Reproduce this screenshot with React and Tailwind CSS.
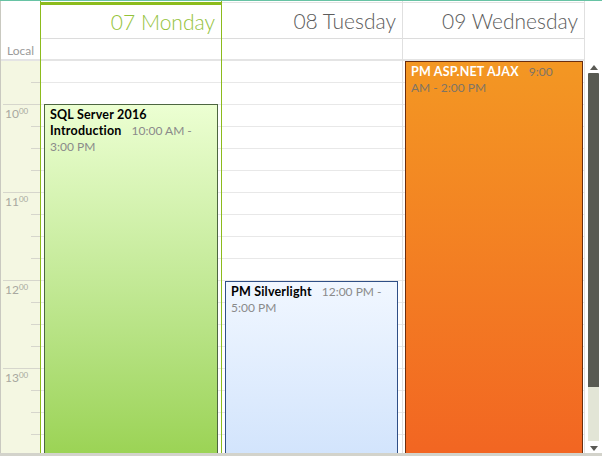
import React from 'react';

const ROWS = 18;

const days = [
  { key: 'mon', label: '07 Monday', width: 'w-[182px]', today: true },
  { key: 'tue', label: '08 Tuesday', width: 'w-[181px]' },
  { key: 'wed', label: '09 Wednesday', width: 'w-[182px]' },
];

const events = {
  mon: {
    title: 'SQL Server 2016 Introduction',
    time: '10:00 AM - 3:00 PM',
    box: 'top-[43px] left-[3px] right-[3px] h-[352px] border-[#4d6640] bg-gradient-to-b from-[#ecffd2] to-[#9bd354] pr-[9px]',
    titleColor: 'text-black',
    timeColor: 'text-[#8a8a8a]',
  },
  tue: {
    title: 'PM Silverlight',
    time: '12:00 PM - 5:00 PM',
    box: 'top-[220px] left-[3px] right-[4px] h-[176px] border-[#2f4f86] bg-gradient-to-b from-[#f1f7ff] to-[#d2e4fc] pr-[9px]',
    titleColor: 'text-black',
    timeColor: 'text-[#8a8a8a]',
  },
  wed: {
    title: 'PM ASP.NET AJAX',
    time: '9:00 AM - 2:00 PM',
    box: 'top-0 left-[2px] right-px h-[396px] border-[#6a2d0e] bg-gradient-to-b from-[#f39723] to-[#f26522] pr-[24px]',
    titleColor: 'text-white',
    timeColor: 'text-[#7e7466]',
  },
};

const Event = ({ ev }) => (
  <div className={`absolute border ${ev.box} pl-[5px] pt-[2px]`}>
    <p className="text-[12px] leading-[16px]">
      <span className={`font-bold text-[12.5px] tracking-[0.2px] ${ev.titleColor}`}>{ev.title}</span>
      <span className={`ml-[10px] ${ev.timeColor}`}>{ev.time}</span>
    </p>
  </div>
);

const TimeColumn = () => (
  <div className="w-[40px] flex-shrink-0 flex flex-col border-l border-[#c9c9c0]">
    <div className="h-px bg-white" />
    <div className="h-[57px] bg-white flex items-end pl-[6px] pb-[2px]">
      <span className="text-[12px] leading-none text-[#9a9a9a]">Local</span>
    </div>
    <div className="h-[2px] bg-[#e4e4e4]" />
    <div className="h-[392px] overflow-hidden bg-[#f4f7e2]">
      {Array.from({ length: ROWS }).map((_, i) => {
        const hour = i % 4 === 1;
        const labelHour = i % 4 === 2 ? 10 + Math.floor((i - 2) / 4) : null;
        return (
          <div key={i} className="h-[22px] flex flex-col">
            <div className="flex-1 pl-[4px] pt-[3px] text-[12px] leading-none text-[#a8a8a0]">
              {labelHour && (
                <span>
                  {labelHour}
                  <sup className="text-[8px] top-[-0.45em]">00</sup>
                </span>
              )}
            </div>
            <div className={`h-px bg-[#d6d6cc] ${hour ? 'w-full ml-[2px]' : 'w-[9px] self-end'}`} />
          </div>
        );
      })}
    </div>
  </div>
);

const DayColumn = ({ day }) => {
  const ev = events[day.key];
  return (
    <div
      className={`${day.width} flex-shrink-0 flex flex-col ${
        day.today ? 'border-x border-[#8cbb1c]' : 'border-r border-[#e0e0e0]'
      }`}
    >
      <div className="h-px bg-white" />
      <div
        className={`h-[37px] flex items-center justify-end pr-[6px] border-b border-[#dcdcdc] ${
          day.today ? 'border-t-[3px] border-t-[#8cbb1c]' : 'border-t border-t-[#e2e2e2]'
        }`}
      >
        <span
          className={`text-[21px] font-light leading-none ${
            day.today ? 'text-[#94c23a]' : 'text-[#5c5c5c]'
          }`}
        >
          {day.label}
        </span>
      </div>
      <div className="h-[22px] border-b-2 border-[#e4e4e4]" />
      <div className="relative h-[392px] overflow-hidden">
        {Array.from({ length: ROWS }).map((_, i) => (
          <div key={i} className="h-[22px] border-b border-[#e8e8e8]" />
        ))}
        <Event ev={ev} />
      </div>
    </div>
  );
};

const ScrollColumn = () => (
  <div className="w-[17px] flex-shrink-0 flex flex-col bg-white">
    <div className="h-[61px]" />
    <div className="h-[392px] flex flex-col items-center pt-[3px]">
      <svg className="block flex-shrink-0" width="8" height="5" viewBox="0 0 8 5">
        <path d="M0 5 L4 0 L8 5 Z" fill="#5a5a55" />
      </svg>
      <div className="mt-[3px] w-[11px] h-[314px] bg-[#585a52] rounded-t-[1px]" />
      <div className="w-[11px] h-[54px] bg-[#e2e5d6]" />
      <svg className="block flex-shrink-0 mt-[5px]" width="8" height="5" viewBox="0 0 8 5">
        <path d="M0 0 L8 0 L4 5 Z" fill="#5a5a55" />
      </svg>
    </div>
  </div>
);

export default function App() {
  return (
    <div
      className="w-[602px] h-[456px] flex flex-col overflow-hidden bg-white"
      style={{ fontFamily: '"Segoe UI", Lato, "Open Sans", sans-serif' }}
    >
      <div className="h-px bg-[#67c3a4]" />
      <div className="flex h-[452px]">
        <TimeColumn />
        {days.map((d) => (
          <DayColumn key={d.key} day={d} />
        ))}
        <ScrollColumn />
      </div>
      <div className="h-[3px] bg-[#d3d3cb]" />
    </div>
  );
}
